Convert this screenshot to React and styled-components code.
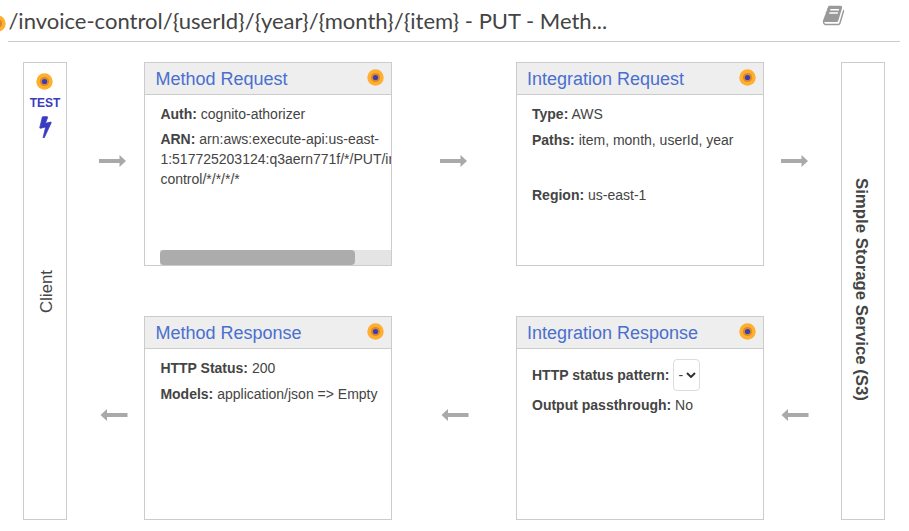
import React from "react";
import styled, { createGlobalStyle } from "styled-components";

const GlobalStyle = createGlobalStyle`
  * { box-sizing: border-box; }
  body {
    margin: 0;
    background: #fff;
    color: #444;
    font: 14px/20px "Liberation Sans", Arial, sans-serif;
    overflow: hidden;
  }
  svg { display: block; }
`;

const Page = styled.main`
  width: 909px;
  height: 531px;
  overflow: hidden;
`;

const TitleBar = styled.header`
  position: relative;
  display: flex;
  justify-content: space-between;
  align-items: flex-start;
  height: 42px;
  margin: 0 9px 20px 8px;
  border-bottom: 1px solid #ccc;
`;

const Title = styled.h1`
  margin: 0;
  padding: 6px 0 0 0.4px;
  font: 400 22.02px/30px Lato, sans-serif;
  white-space: nowrap;
`;

const TitleMarker = styled.span`
  position: absolute;
  left: -19px;
  top: 15px;
`;

const DocsIcon = styled.svg`
  width: 23px;
  height: 23px;
  margin: 4px 55.5px 0 0;
  fill: #999;
`;

const Flow = styled.section`
  display: grid;
  grid-template-columns: 44px 77px 248px 124px 248px 77px 44px;
  grid-template-rows: 204px 50px 204px;
  margin-left: 23px;
`;

const Endpoint = styled.aside`
  grid-column: ${(p) => p.$column};
  grid-row: 1 / 4;
  display: flex;
  flex-direction: column;
  align-items: center;
  border: 1px solid #ccc;
  background: #fff;
`;

const TestButton = styled.div`
  display: flex;
  flex-direction: column;
  align-items: center;
  height: 76px;
  padding-top: 10px;
  color: #3b3bc1;
  font-size: 12px;
  font-weight: 700;
  line-height: 16px;
`;

const TestLabel = styled.span`
  margin: 5px 0 4px;
`;

const BoltIcon = styled.svg`
  width: 23px;
  height: 23px;
  margin-left: 1px;
  fill: #3b3bc1;
  stroke: #3b3bc1;
  stroke-width: 60px;
`;

const ClientLabel = styled.div`
  writing-mode: vertical-rl;
  transform: rotate(180deg);
  margin: 131px 0 0 3px;
  font-size: 16.8px;
  line-height: 20px;
`;

const ServiceLabel = styled.div`
  writing-mode: vertical-rl;
  margin: 115px 4px 0 0;
  font-size: 16.8px;
  font-weight: 700;
  line-height: 20px;
  white-space: nowrap;
`;

const Card = styled.article`
  grid-column: ${(p) => p.$column};
  grid-row: ${(p) => p.$row};
  display: flex;
  flex-direction: column;
  min-width: 0;
  border: 1px solid #ccc;
  background: #fff;
  overflow: hidden;
`;

const CardHeader = styled.div`
  display: flex;
  justify-content: space-between;
  align-items: flex-start;
  height: 32px;
  padding: 6px 7px 0 ${(p) => 10 + p.$shift}px;
  border-bottom: 1px solid #ccc;
  background: #eee;
`;

const CardTitle = styled.h2`
  margin: 0;
  color: #4a6fce;
  font-size: 18px;
  font-weight: 400;
  line-height: 20px;
`;

const CardBody = styled.div`
  flex: 1;
  display: flex;
  flex-direction: column;
  padding: ${(p) => p.$top || 9}px 0 0 15px;
`;

const Field = styled.p`
  margin: 0 0 ${(p) => (p.$gap === undefined ? 6 : p.$gap)}px ${(p) => p.$shift || 0}px;
  white-space: pre;
`;

const SelectField = styled.div`
  display: flex;
  align-items: center;
  height: 32px;
  margin-bottom: 4px;
  gap: 4px;
`;

const Select = styled.button`
  display: flex;
  align-items: center;
  gap: 3px;
  width: 27px;
  height: 32px;
  padding: 0 0 0 4px;
  border: 1px solid #ddd;
  border-radius: 4px;
  background: #fff;
  color: #444;
  font: inherit;
`;

const ScrollTrack = styled.div`
  height: 15px;
  margin-top: auto;
  background: #e4e4e4;
`;

const ScrollThumb = styled.div`
  width: 195px;
  height: 15px;
  border-radius: 4px;
  background: #acacac;
`;

const ArrowCell = styled.div`
  grid-column: ${(p) => p.$column};
  grid-row: ${(p) => p.$row};
  padding: ${(p) => p.$top}px 0 0 ${(p) => p.$left}px;
`;

function Dot() {
  return (
    <svg width="17" height="17" viewBox="0 0 17 17">
      <circle cx="8.5" cy="8.5" r="8.2" fill="#ffae2e" />
      <circle cx="8.5" cy="8.5" r="4.6" fill="#d78a28" />
      <circle cx="8.5" cy="8.5" r="2.6" fill="#3f3bb5" />
    </svg>
  );
}

function Arrow({ column, row, top, left, back }) {
  return (
    <ArrowCell $column={column} $row={row} $top={top} $left={left}>
      <svg width="28" height="12" viewBox="0 0 28 12" fill="#a9a9a9">
        {back ? (
          <path d="M0.5 6 7 0v4h20.5v4H7v4z" />
        ) : (
          <path d="M27 6 20.5 0v4H0v4h20.5v4z" />
        )}
      </svg>
    </ArrowCell>
  );
}

function FlowCard({ title, column, row, top, shift = 0, children }) {
  return (
    <Card $column={column} $row={row}>
      <CardHeader $shift={shift}>
        <CardTitle>{title}</CardTitle>
        <Dot />
      </CardHeader>
      <CardBody $top={top}>{children}</CardBody>
    </Card>
  );
}

export default function App() {
  return (
    <Page>
      <GlobalStyle />
      <TitleBar>
        <TitleMarker><Dot /></TitleMarker>
        <Title>{"/invoice-control/{userId}/{year}/{month}/{item} - PUT - Meth..."}</Title>
        <DocsIcon viewBox="0 0 1792 1792">
          <path d="M1703 478q40 57 18 129l-275 906q-19 64-76.5 107.5t-122.5 43.5h-923q-77 0-148.5-53.5t-99.5-131.5q-24-67-2-127 0-4 3-27t4-37q1-8-3-21.5t-3-19.5q2-11 8-21t16.5-23.5 16.5-23.5q23-38 45-91.5t30-91.5q3-10 .5-30t-.5-28q3-11 17-28t17-23q21-36 42-92t25-90q1-9-2.5-32t.5-28q4-13 22-30.5t22-22.5q19-26 42.5-84.5t27.5-96.5q1-8-3-25.5t-2-26.5q2-8 9-18t18-23 17-21q8-12 16.5-30.5t15-35 16-36 19.5-32 26.5-23.5 36-11.5 47.5 5.5l-1 3q38-9 51-9h761q74 0 114 56t18 130l-274 906q-36 119-71.5 153.5t-128.5 34.5h-869q-27 0-38 15-11 16-1 43 24 70 144 70h923q29 0 56-15.5t35-41.5l300-987q7-22 5-57 38 15 59 43zm-1064 2q-4 13 2 22.5t20 9.5h608q13 0 25.5-9.5t16.5-22.5l21-64q4-13-2-22.5t-20-9.5h-608q-13 0-25.5 9.5t-16.5 22.5zm-83 256q-4 13 2 22.5t20 9.5h608q13 0 25.5-9.5t16.5-22.5l21-64q4-13-2-22.5t-20-9.5h-608q-13 0-25.5 9.5t-16.5 22.5z" />
        </DocsIcon>
      </TitleBar>
      <Flow>
        <Endpoint $column={1}>
          <TestButton>
            <Dot />
            <TestLabel>TEST</TestLabel>
            <BoltIcon viewBox="0 0 1792 1792">
              <path d="M1333 566q18 20 7 44l-540 1157q-13 25-42 25-4 0-14-2-17-5-25.500-19t-4.500-30l197-808-406 101q-4 1-12 1-18 0-31-11-18-15-13-39l201-825q4-14 16-23t28-9h328q19 0 32 12.500t13 29.500q0 8-5 18l-171 463 396-98q8-2 12-2 19 0 34 15z" />
            </BoltIcon>
          </TestButton>
          <ClientLabel>Client</ClientLabel>
        </Endpoint>

        <Arrow column={2} row={1} top={93} left={32} />
        <FlowCard title="Method Request" column={3} row={1} shift={0.5}>
          <Field $gap={5} $shift={0.4}><b>Auth:</b> cognito-athorizer</Field>
          <Field $shift={0.4}>
            <b>ARN:</b>
            {" arn:aws:execute-api:us-east-\n1:517725203124:q3aern771f/*/PUT/invoice-\ncontrol/*/*/*/*"}
          </Field>
          <ScrollTrack><ScrollThumb /></ScrollTrack>
        </FlowCard>
        <Arrow column={4} row={1} top={93} left={48} />
        <FlowCard title="Integration Request" column={5} row={1}>
          <Field><b>Type:</b> AWS</Field>
          <Field $gap={35}><b>Paths:</b> item, month, userId, year</Field>
          <Field><b>Region:</b> us-east-1</Field>
        </FlowCard>
        <Arrow column={6} row={1} top={93} left={17} />

        <Arrow column={2} row={3} top={93} left={33} back />
        <FlowCard title="Method Response" column={3} row={3} shift={0.5}>
          <Field $shift={0.4}><b>HTTP Status:</b> 200</Field>
          <Field $shift={0.4}><b>Models:</b>{" application/json => Empty"}</Field>
        </FlowCard>
        <Arrow column={4} row={3} top={93} left={48.6} back />
        <FlowCard title="Integration Response" column={5} row={3} top={10}>
          <SelectField>
            <b>HTTP status pattern:</b>
            <Select>
              -
              <svg width="10" height="6" viewBox="0 0 10 6" fill="none" stroke="#333" strokeWidth="2">
                <path d="M1 1l4 4 4-4" />
              </svg>
            </Select>
          </SelectField>
          <Field><b>Output passthrough:</b> No</Field>
        </FlowCard>
        <Arrow column={6} row={3} top={93} left={17} back />

        <Endpoint $column={7}>
          <ServiceLabel>Simple Storage Service (S3)</ServiceLabel>
        </Endpoint>
      </Flow>
    </Page>
  );
}
